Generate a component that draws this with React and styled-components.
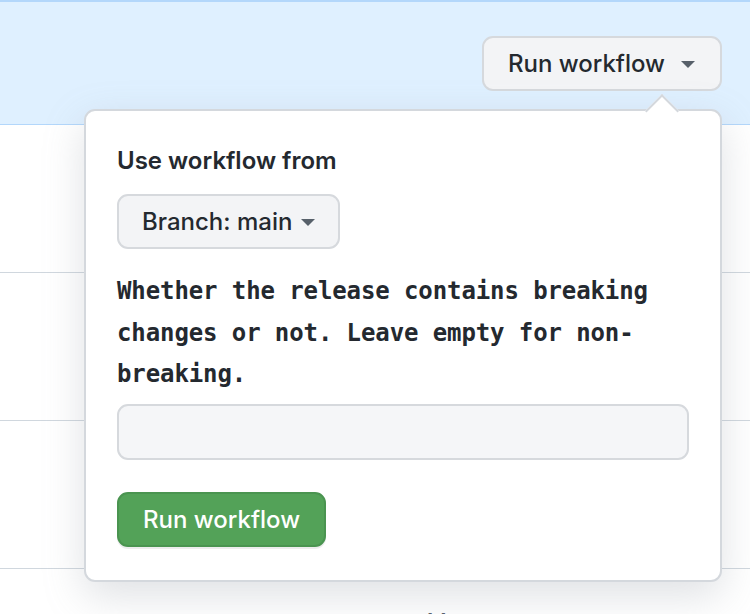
import React from 'react';
import styled, { createGlobalStyle } from "styled-components";

const GlobalStyle = createGlobalStyle`
  html, body {
    margin: 0;
    padding: 0;
    background: #ffffff;
    overflow: hidden;
  }
  body {
    font-family: Inter, "Liberation Sans", sans-serif;
    color: #24292f;
  }
`;

const Page = styled.div`
  width: 750px;
  height: 614px;
  overflow: hidden;
`;

const Banner = styled.div`
  display: flex;
  justify-content: flex-end;
  height: 88px;
  padding: 34px 28px 0 0;
  background: #dff0ff;
  border-top: 2px solid #b3d7fb;
  border-bottom: 1px solid #b3d7fb;
`;

const TriggerWrap = styled.div`
  position: relative;
  height: 55px;
`;

const Button = styled.button`
  display: flex;
  align-items: center;
  gap: ${p => p.$gap || 16}px;
  height: ${p => p.$height || 55}px;
  padding: 0 ${p => p.$padRight || 25}px 0 ${p => p.$padLeft || 24}px;
  box-sizing: border-box;
  font-family: Inter, "Liberation Sans", sans-serif;
  font-size: 24px;
  font-weight: 500;
  color: ${p => p.$primary ? '#ffffff' : '#24292f'};
  background: ${p => p.$primary ? '#53a258' : '#f3f4f6'};
  border: 2px solid ${p => p.$primary ? '#4a9450' : '#d6d9dd'};
  border-radius: 11px;
  box-shadow: ${p => p.$primary ? '0 2px 0 rgba(27,31,36,0.08)' : 'none'};
  white-space: nowrap;
  cursor: pointer;
`;

const Caret = styled.span`
  width: 0;
  height: 0;
  border-left: 7px solid transparent;
  border-right: 7px solid transparent;
  border-top: 7px solid #57606a;
  margin-top: 2px;
`;

const Popover = styled.div`
  position: absolute;
  top: 73px;
  right: 0;
  width: 638px;
  box-sizing: border-box;
  padding: 36px 31px 33px;
  background: #ffffff;
  border: 2px solid #d4d8dd;
  border-radius: 11px;
  box-shadow: 0 14px 40px rgba(140, 149, 159, 0.28);
  z-index: 10;

  &::before {
    content: "";
    position: absolute;
    top: -12px;
    right: 46px;
    width: 22px;
    height: 22px;
    background: #ffffff;
    border-top: 2px solid #d4d8dd;
    border-left: 2px solid #d4d8dd;
    transform: rotate(45deg);
  }
`;

const Label = styled.div`
  font-size: 24px;
  font-weight: 600;
  line-height: 28px;
  margin-bottom: 19px;
`;

const Description = styled.p`
  margin: 22px 0 8px;
  font-family: "DejaVu Sans Mono", "Liberation Mono", monospace;
  font-size: 24px;
  font-weight: 700;
  line-height: 41.5px;
  letter-spacing: -0.1px;
  color: #24292f;
`;

const Input = styled.input`
  display: block;
  width: 100%;
  height: 56px;
  box-sizing: border-box;
  background: #f5f6f8;
  border: 2px solid #d6d9dd;
  border-radius: 11px;
  font-size: 22px;
  outline: none;
`;

const Footer = styled.div`
  margin-top: 32px;
`;

const Rows = styled.div`
  display: flex;
  flex-direction: column;
`;

const Row = styled.div`
  height: 147px;
  border-bottom: 1px solid #d0d7de;
`;

const Tail = styled.div`
  display: flex;
  padding: 39px 0 0 427px;
  font-size: 24px;
  font-weight: 600;
  letter-spacing: 7px;
  color: #57606a;
`;

function App() {
  return (
    <Page>
      <GlobalStyle />
      <Banner>
        <TriggerWrap>
          <Button>
            Run workflow
            <Caret />
          </Button>
          <Popover>
            <Label>Use workflow from</Label>
            <Button $padLeft={23} $padRight={23} $gap={9}>
              Branch: main
              <Caret />
            </Button>
            <Description>
              Whether the release contains breaking changes or not. Leave empty for non-breaking.
            </Description>
            <Input type="text" />
            <Footer>
              <Button $primary $padLeft={24} $padRight={24}>Run workflow</Button>
            </Footer>
          </Popover>
        </TriggerWrap>
      </Banner>
      <Rows>
        <Row />
        <Row />
        <Row />
      </Rows>
      <Tail>ll</Tail>
    </Page>
  );
}

export default App;
